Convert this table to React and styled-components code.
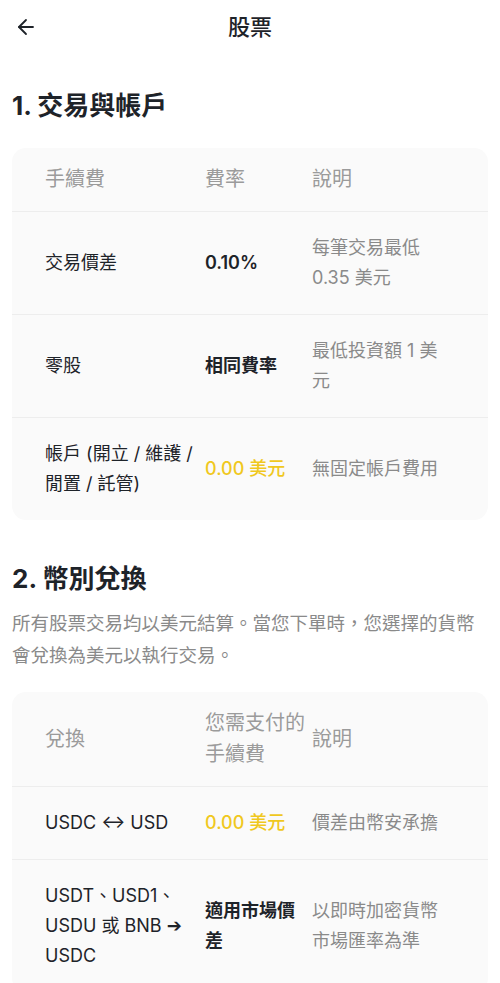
import React from "react";
import styled, { createGlobalStyle } from "styled-components";
import { ArrowLeft } from "lucide-react";

const Global = createGlobalStyle`
  html, body { margin: 0; padding: 0; background: #ffffff; }
  body {
    font-family: Inter, "Noto Sans CJK TC", "Noto Sans", "DejaVu Sans", sans-serif;
    color: #1e2329;
    -webkit-font-smoothing: antialiased;
  }
`;

const Page = styled.div`
  padding: 0 12px 40px;
`;

const TopBar = styled.header`
  height: 54px;
  display: grid;
  grid-template-columns: 40px 1fr 40px;
  align-items: center;
`;

const BackButton = styled.button`
  border: 0;
  background: none;
  padding: 0 0 0 2px;
  display: flex;
  align-items: center;
  color: #1e2329;
  cursor: pointer;
`;

const Title = styled.h1`
  margin: 0;
  text-align: center;
  font-size: 22px;
  font-weight: 500;
  line-height: 30px;
`;

const SectionHeading = styled.h2`
  margin: ${(p) => p.$top}px 0 0;
  font-size: 26px;
  line-height: 36px;
  font-weight: 700;
  color: #1e2329;
`;

const Intro = styled.p`
  margin: 10px 0 0;
  font-size: 18.5px;
  line-height: 32px;
  color: #8a8a8a;
`;

const Card = styled.div`
  margin-top: ${(p) => p.$top}px;
  background: #fafafa;
  border-radius: 14px;
  overflow: hidden;
`;

const Row = styled.div`
  display: grid;
  grid-template-columns: 160px 107px 1fr;
  align-items: center;
  padding: 21px 33px;
  font-size: 18px;
  line-height: 30px;
  border-bottom: 1px solid #ededed;
  &:last-child { border-bottom: 0; }
`;

const HeadRow = styled(Row)`
  padding: 16px 33px;
  font-size: 20px;
  line-height: 31px;
  color: #9b9b9b;
`;

const Cell = styled.div`
  color: #1e2329;
  padding-right: 4px;
`;

const HeadCell = styled.div``;

const Fee = styled.div`
  font-weight: ${(p) => (p.$free ? 500 : 600)};
  color: ${(p) => (p.$free ? "#f0c81e" : "#1e2329")};
`;

const Note = styled.div`
  color: #8a8a8a;
  padding-right: 6px;
`;

export default function App() {
  return (
    <>
      <Global />
      <Page>
        <TopBar>
          <BackButton aria-label="返回">
            <ArrowLeft size={24} strokeWidth={1.8} />
          </BackButton>
          <Title>股票</Title>
          <span />
        </TopBar>

        <SectionHeading $top={34}>1. 交易與帳戶</SectionHeading>
        <Card $top={24}>
          <HeadRow>
            <HeadCell>手續費</HeadCell>
            <HeadCell>費率</HeadCell>
            <HeadCell>說明</HeadCell>
          </HeadRow>
          <Row>
            <Cell>交易價差</Cell>
            <Fee>0.10%</Fee>
            <Note>每筆交易最低 0.35 美元</Note>
          </Row>
          <Row>
            <Cell>零股</Cell>
            <Fee>相同費率</Fee>
            <Note>最低投資額 1 美元</Note>
          </Row>
          <Row>
            <Cell>帳戶 (開立 / 維護 / 閒置 / 託管)</Cell>
            <Fee $free>0.00 美元</Fee>
            <Note>無固定帳戶費用</Note>
          </Row>
        </Card>

        <SectionHeading $top={41}>2. 幣別兌換</SectionHeading>
        <Intro>
          所有股票交易均以美元結算。當您下單時，您選擇的貨幣會兌換為美元以執行交易。
        </Intro>
        <Card $top={21}>
          <HeadRow>
            <HeadCell>兌換</HeadCell>
            <HeadCell>您需支付的手續費</HeadCell>
            <HeadCell>說明</HeadCell>
          </HeadRow>
          <Row>
            <Cell>USDC ↔ USD</Cell>
            <Fee $free>0.00 美元</Fee>
            <Note>價差由幣安承擔</Note>
          </Row>
          <Row>
            <Cell>USDT、USD1、USDU 或 BNB ➔ USDC</Cell>
            <Fee>適用市場價差</Fee>
            <Note>以即時加密貨幣市場匯率為準</Note>
          </Row>
        </Card>
      </Page>
    </>
  );
}
